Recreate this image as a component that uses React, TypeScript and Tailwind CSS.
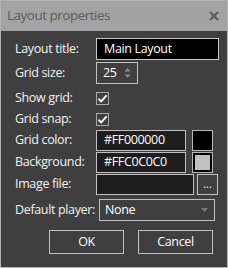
import React from "react";

const font = { fontFamily: '"Open Sans", "Noto Sans", sans-serif' };

function Check() {
  return (
    <div className="w-[13px] h-[13px] border border-[#a8a8a8] flex items-center justify-center">
      <svg width="11" height="11" viewBox="0 0 11 11">
        <path d="M1.5 5.8 L4.2 8.4 L9.6 2.4" fill="none" stroke="#ffffff" strokeWidth="1.9" />
      </svg>
    </div>
  );
}

function Label({ children, w = "w-[81px]" }: { children: React.ReactNode; w?: string }) {
  return (
    <div className={`${w} shrink-0 whitespace-nowrap text-[12.5px] tracking-[-0.35px] text-[#f2f2f2] leading-none`}>
      {children}
    </div>
  );
}

const txt = "text-[12.5px] tracking-[-0.35px] text-white";

export default function App() {
  return (
    <div className="w-[228px] h-[268px] flex flex-col bg-[#3f3f3f] border border-[#b4b4b4] select-none" style={font}>
      {/* title bar */}
      <div className="h-[30px] shrink-0 bg-[#a3a3a3] flex items-center justify-between pl-[6px] pr-[8px]">
        <span className="text-[13.5px] tracking-[-0.5px] text-[#5c5c5c] leading-none">Layout properties</span>
        <svg width="10" height="10" viewBox="0 0 10 10">
          <path d="M1 1 L9 9 M9 1 L1 9" stroke="#5c5c5c" strokeWidth="2.2" />
        </svg>
      </div>

      <div className="flex flex-col pl-[14px] pt-[7px]">
        <div className="flex items-center h-[22px]">
          <Label>Layout title:</Label>
          <div className={`w-[123px] h-[22px] bg-black border border-[#c8c8c8] flex items-center pl-[7px] ${txt}`}>
            Main Layout
          </div>
        </div>

        <div className="flex items-center h-[22px] mt-[2px]">
          <Label>Grid size:</Label>
          <div className={`w-[42px] h-[22px] border border-[#c0c0c0] flex items-center justify-between pl-[6px] pr-[6px] ${txt}`}>
            <span>25</span>
            <svg width="7" height="12" viewBox="0 0 7 12">
              <path d="M0.5 4.5 L3.5 1 L6.5 4.5 Z" fill="#8a8a8a" />
              <path d="M0.5 7.5 L3.5 11 L6.5 7.5 Z" fill="#8a8a8a" />
            </svg>
          </div>
        </div>

        <div className="flex items-center h-[13px] mt-[8px]">
          <Label>Show grid:</Label>
          <Check />
        </div>

        <div className="flex items-center h-[13px] mt-[8px]">
          <Label>Grid snap:</Label>
          <Check />
        </div>

        <div className="flex items-center h-[21px] mt-[4px]">
          <Label>Grid color:</Label>
          <div className={`w-[90px] h-[21px] bg-[#1e1e1e] border border-[#c0c0c0] flex items-center pl-[7px] ${txt}`}>
            #FF000000
          </div>
          <div className="ml-[6px] w-[21px] h-[21px] border border-[#b8b8b8] bg-black" />
        </div>

        <div className="flex items-center h-[21px] mt-[1px]">
          <Label>Background:</Label>
          <div className={`w-[90px] h-[21px] bg-[#1e1e1e] border border-[#c0c0c0] flex items-center pl-[7px] ${txt}`}>
            #FFC0C0C0
          </div>
          <div className="ml-[6px] w-[21px] h-[21px] border border-[#b8b8b8] p-[2px] bg-black">
            <div className="w-full h-full bg-[#c0c0c0]" />
          </div>
        </div>

        <div className="flex items-center h-[21px] mt-[1px]">
          <Label>Image file:</Label>
          <div className="w-[98px] h-[21px] bg-[#1e1e1e] border border-[#c0c0c0]" />
          <div className="ml-[3px] w-[21px] h-[21px] border border-[#c0c0c0] flex items-end justify-center pb-[5px] text-[11px] text-white leading-none">
            ...
          </div>
        </div>

        <div className="flex items-center h-[22px] mt-[4px]">
          <Label w="w-[84px]">Default player:</Label>
          <div className={`w-[116px] h-[22px] border border-[#c0c0c0] flex items-center justify-between pl-[5px] pr-[6px] ${txt}`}>
            <span>None</span>
            <svg width="7" height="4" viewBox="0 0 7 4">
              <path d="M0 0 L7 0 L3.5 4 Z" fill="#7a7a7a" />
            </svg>
          </div>
        </div>

        <div className="flex h-[24px] mt-[9px] pl-[34px] gap-[14px]">
          <div className={`w-[75px] h-[24px] border border-[#c0c0c0] flex items-center justify-center ${txt}`}>
            OK
          </div>
          <div className={`w-[75px] h-[24px] border border-[#c0c0c0] flex items-center justify-center ${txt}`}>
            Cancel
          </div>
        </div>
      </div>
    </div>
  );
}
